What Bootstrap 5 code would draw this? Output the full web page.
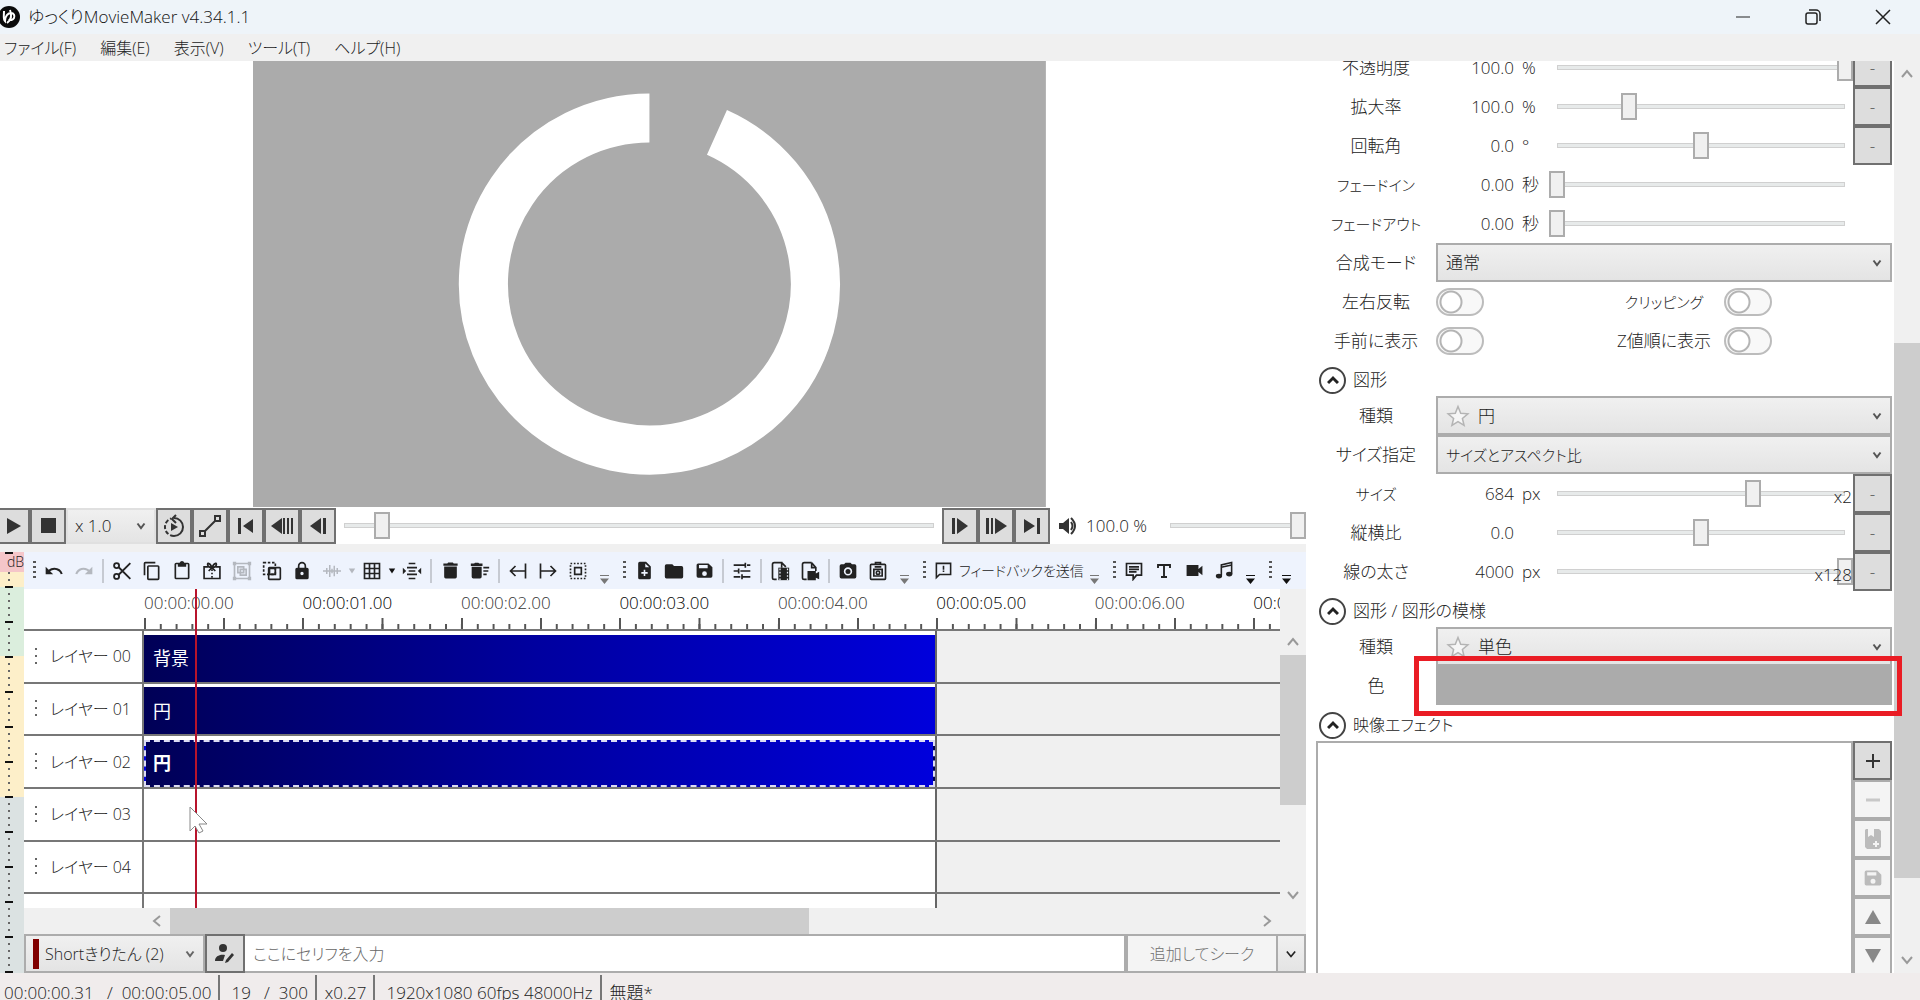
<!DOCTYPE html>
<html lang="ja">
<head>
<meta charset="utf-8">
<meta name="viewport" content="width=device-width, initial-scale=1">
<title>ゆっくりMovieMaker v4.34.1.1</title>
<link href="https://cdn.jsdelivr.net/npm/bootstrap@5.3.0/dist/css/bootstrap.min.css" rel="stylesheet">
<style>
:root{--edge:#707070;--soft:#acacac;--face:#dddddd;--chrome:#f0f0f0;--ink:#222}
body{font-family:"Open Sans","Noto Sans CJK JP",sans-serif;font-size:17px;font-weight:300;line-height:24px;color:var(--ink);background:#fff;font-feature-settings:"palt"}
button,input,select{font-family:inherit;font-size:inherit;font-weight:inherit;line-height:inherit;color:inherit;font-feature-settings:inherit;margin:0}
button{padding:0;display:inline-flex;align-items:center;justify-content:center}
svg{display:block;flex:none}
.kana{font-size:15px!important}
.app-window{height:100vh;min-width:1200px}
.title-strip{height:34px;background:#eef4f9;color:#111;padding-right:2px}
.title-strip button{width:70px;height:34px;border:0;background:none}
.menu-strip{height:27px;background:var(--chrome);z-index:2;font-size:16px;gap:24px;padding-top:1px}
.menu-strip a{color:#222;text-decoration:none}
.work-area{flex:1 1 0;min-height:0}
.left-pane{min-width:0;background:var(--chrome)}
.preview-box{padding-right:7px;flex:1 1 0;min-height:0;background:#fff}
.tool-btn{width:36px;height:36px;border:2px solid var(--edge);background:var(--face)}
.play-strip{height:37px;background:#fff;margin-bottom:8px}
.combo{appearance:none;border:2px solid var(--soft);border-radius:0;color:#222;padding:0 30px 0 8px;
 background:url("data:image/svg+xml,%3Csvg xmlns='http://www.w3.org/2000/svg' width='10' height='8' viewBox='0 0 10 8'%3E%3Cpath d='M1.500 1.500 5 6l3.500-4.500' fill='none' stroke='%23555' stroke-width='2'/%3E%3C/svg%3E") no-repeat right 8px center,linear-gradient(#f0f0f0,#e4e4e4)}
.combo-rate{width:90px;height:36px;padding:0 24px 0 7px;border-color:#e0e0e0}
.range-bar{appearance:none;background:none;height:27px;min-width:0;padding:0}
.range-bar::-webkit-slider-runnable-track{height:27px;background:linear-gradient(#e7eaea,#e7eaea) center/calc(100% - 18px) 3px no-repeat,linear-gradient(#d0d0d0,#d0d0d0) center/calc(100% - 16px) 5px no-repeat}
.range-bar::-webkit-slider-thumb{appearance:none;width:16px;height:27px;background:var(--chrome);border:2px solid var(--soft)}
.icon-strip{height:37px;background:#eef3fd;padding-left:5px;overflow:hidden}
.tray{height:37px;margin-right:3px}
.tray button{width:30px;height:37px;border:0;background:none}
.tray .drop-btn{width:10px}
.tray .more-btn{width:23px;align-items:flex-end;padding-bottom:5px}
.tray .feed-btn{width:154px;gap:6px;justify-content:flex-start;padding-left:5px}
.tray button:disabled{color:#b4b8bf}
.grip{width:10px;height:20px;background:repeating-linear-gradient(#555 0 2px,transparent 2px 5px) center/3px 20px no-repeat}
.vr-sep{width:2px;height:24px;margin:0 3px;background:#c6cad2}
.meter{width:24px;background:
 linear-gradient(#111,#111) 5px 0/8px 2px no-repeat,
 repeating-linear-gradient(#111 0 2px,transparent 2px 35px) 5px 34px/8px 100% no-repeat,
 repeating-linear-gradient(#666 0 2px,transparent 2px 7px) 8px 20px/2px 100% no-repeat,
 linear-gradient(#f5c6c9 0 20px,#fdefc9 20px 35px,#dbeedd 35px 104px,#fdefc9 104px 245px,#dbe2e2 245px)}
.meter span{display:block;font-size:14px;line-height:20px;padding-left:7px}
.ruler{height:42px;background:#fff;border-bottom:2px solid #777}
.ruler-sec{flex:0 0 13.95%;padding-top:2px;color:#333;background:linear-gradient(90deg,#555 2px,transparent 2px) left bottom/10% 5px repeat-x,linear-gradient(90deg,#555 2px,transparent 2px) left bottom/50% 11px repeat-x}
.ruler-sec:nth-child(even){color:#000}
.head-col{width:120px;flex:none}
.lanes{height:277px}
.lane{height:19%;border-bottom:2px solid #777}
.lane .head-col{background:#fff;border-right:2px solid #777;padding-left:11px;gap:13px;font-size:16px}
.lane-dots{width:2px;height:17px;background:repeating-linear-gradient(#666 0 2px,transparent 2px 7px)}
.lane-range{width:69.8%;background:#fff;border-right:2px solid #666}
.clip{height:47px;color:#fff;font-size:18px;font-weight:400;padding-left:9px;background:linear-gradient(90deg,#000056,#0000a0 50%,#0000dc)}
.clip-chosen{border:2px dashed #dcdcf4;padding-left:7px;font-weight:700}
.playhead{position:absolute;left:171px;top:0;bottom:0;width:2px;background:#b8142c;z-index:2}
.pointer{position:absolute;left:165px;top:216px;z-index:3}
.bar-v{width:26px;background:var(--chrome)}
.bar-v i,.bar-h i{display:block;background:#cdcdcd}
.bar-h{height:26px;margin-left:120px;margin-right:26px}
.bar-h i{width:639px;height:26px}
.arrow-cell{width:26px;height:26px;color:#999}
.entry-strip{height:39px}
.voice-box{width:181px;border:2px solid var(--soft);background:linear-gradient(#f0f0f0,#e4e4e4)}
.voice-box i{width:6px;height:30px;margin-left:7px;background:#800000}
.voice-box .combo{border:0;background:url("data:image/svg+xml,%3Csvg xmlns='http://www.w3.org/2000/svg' width='10' height='8' viewBox='0 0 10 8'%3E%3Cpath d='M1.500 1.500 5 6l3.500-4.500' fill='none' stroke='%23666' stroke-width='2'/%3E%3C/svg%3E") no-repeat right 8px center;padding:0 20px 0 6px;font-size:16px;min-width:0}
.line-input{border:2px solid var(--soft);border-width:2px 2px 2px 0;padding:0 8px;border-radius:0;outline:0;font-size:16px;min-width:0}
.line-input::placeholder{color:#666;opacity:1}
.seek-btn{width:152px;border:2px solid var(--soft);background:#f4f4f4;color:#707070;font-size:16px}
.seek-drop{width:28px;border:2px solid var(--soft);border-left:0;background:linear-gradient(#f0f0f0,#e4e4e4)}
.status-strip{height:27px;background:#f0ecec;padding-top:2px;overflow:hidden;white-space:nowrap}
.status-strip>span{border-right:2px solid #777;height:25px;padding:6px 7px 0 8px;line-height:24px}
.status-strip>.wide-cell{padding-left:11px}
.right-pane{width:606px;margin-left:8px;flex:none}
.props{margin-top:-13px;padding:0 2px}
.prop-row{height:39px}
.prop-row label{width:120px;flex:none;text-align:center}
.prop-row .combo{height:39px;flex:1 1 0;min-width:0}
.combo-star{padding-left:40px!important;background:url("data:image/svg+xml,%3Csvg xmlns='http://www.w3.org/2000/svg' width='10' height='8' viewBox='0 0 10 8'%3E%3Cpath d='M1.500 1.500 5 6l3.500-4.500' fill='none' stroke='%23555' stroke-width='2'/%3E%3C/svg%3E") no-repeat right 8px center,url("data:image/svg+xml,%3Csvg xmlns='http://www.w3.org/2000/svg' width='24' height='24' viewBox='0 0 24 24'%3E%3Cpath d='M12 2.500l2.700 6.700 7.200.600-5.500 4.700 1.700 7L12 17.700l-6.100 3.800 1.700-7L2.100 9.800l7.200-.600z' fill='%23f6f6f6' stroke='%23b4b4b4' stroke-width='1.500'/%3E%3C/svg%3E") no-repeat 8px center,linear-gradient(#f0f0f0,#e4e4e4)}
.num-val{width:78px;text-align:right}
.num-unit{width:27px;margin-left:8px}
.range-slot{flex:1 1 0;min-width:0}
.times-tag{position:absolute;right:1px;top:5px}
.anim-btn{width:39px;height:39px;border:2px solid var(--edge);background:var(--face);color:#555}
.anim-gap{width:39px}
.flip-box{appearance:none;width:48px;height:28px;border:2px solid #bcbcbc;border-radius:14px;background:radial-gradient(circle at 13px 12px,#fff 9px,#b4b4b4 10px 11px,transparent 12px) #f8f8f8}
.section-head{height:36px;gap:7px;padding-left:3px;padding-top:4px}
.section-head button{width:27px;height:27px;border:2px solid #444;border-radius:50%;background:#fff}
.color-well{flex:1 1 0;height:39px;border:0;background:#ababab}
.fx-area{flex:1 1 0;min-height:0;overflow:hidden;padding:0 2px}
.fx-list{flex:1 1 0;border:2px solid var(--soft);border-bottom:0;background:#fff}
.fx-btn{width:39px;height:39px;border:2px solid var(--soft);background:#f4f4f4;color:#b8b8b8;flex:none}
.fx-add{border-color:var(--edge);background:var(--face);color:#333}
.red-mark{position:absolute;right:18px;top:656px;width:488px;height:60px;border:5px solid #ea1c24;z-index:5;pointer-events:none}
</style>
</head>
<body class="overflow-hidden">
<svg width="0" height="0" class="position-absolute" aria-hidden="true"><defs>
<symbol id="undo" viewBox="0 0 24 24"><path d="M12.500 8c-2.650 0-5.050 1-6.900 2.600L2 7v9h9l-3.620-3.620A8 8 0 0 1 20.100 16l2.370-.780A10.500 10.500 0 0 0 12.500 8z"/></symbol>
<symbol id="redo" viewBox="0 0 24 24"><path d="M18.400 10.600A10.500 10.500 0 0 0 1.540 15.220L3.900 16a8 8 0 0 1 12.700-3.620L13 16h9V7z"/></symbol>
<symbol id="cut" viewBox="0 0 24 24"><g fill="none" stroke="currentColor" stroke-width="2.200"><circle cx="5.500" cy="5.500" r="3"/><circle cx="5.500" cy="18.500" r="3"/><path d="M8 7.500 22 21.500M8 16.500 22 2.500"/></g></symbol>
<symbol id="copy" viewBox="0 0 24 24"><path d="M16 1H4a2 2 0 0 0-2 2v14h2V3h12zm3 4H8a2 2 0 0 0-2 2v14a2 2 0 0 0 2 2h11a2 2 0 0 0 2-2V7a2 2 0 0 0-2-2zm0 16H8V7h11z"/></symbol>
<symbol id="paste" viewBox="0 0 24 24"><path d="M19 2h-4.180a3 3 0 0 0-5.640 0H5a2 2 0 0 0-2 2v16a2 2 0 0 0 2 2h14a2 2 0 0 0 2-2V4a2 2 0 0 0-2-2zm0 18H5V4h2v3h10V4h2z"/></symbol>
<symbol id="gift" viewBox="0 0 24 24"><g fill="none" stroke="currentColor" stroke-width="2"><path d="M8 7H2.500v14h19V7H16M12 8C9 1 5 2 7.500 6c1 1.500 3 2 4.500 2s3.500-.5 4.500-2C19 2 15 1 12 8M8 12l4-4 4 4"/><path d="M12 10v12" stroke-dasharray="2 2"/></g></symbol>
<symbol id="group" viewBox="0 0 24 24"><g fill="none" stroke="currentColor" stroke-width="2"><path d="M3 3h18v18H3z"/><path d="M7 7h7v7H7zM10 10h7v7h-7z"/></g><path d="M1 1h4v4H1zM19 1h4v4h-4zM1 19h4v4H1zM19 19h4v4h-4z"/></symbol>
<symbol id="merge" viewBox="0 0 24 24"><g fill="none" stroke="currentColor" stroke-width="2"><path d="M2 2h14v14H2z" stroke-dasharray="3 2"/><rect x="8" y="8" width="14" height="14" rx="1"/><path d="M9 9h7v7H9z"/></g></symbol>
<symbol id="lock" viewBox="0 0 24 24"><path d="M18 8h-1V6A5 5 0 0 0 7 6v2H6a2 2 0 0 0-2 2v10a2 2 0 0 0 2 2h12a2 2 0 0 0 2-2V10a2 2 0 0 0-2-2zm-6 9a2 2 0 1 1 0-4 2 2 0 0 1 0 4zM9 8V6a3 3 0 0 1 6 0v2z"/></symbol>
<symbol id="wave" viewBox="0 0 24 24"><path d="M0 12h24M5 8v8M9 4v16M12 9v6M15 5v14M19 8v8" fill="none" stroke="currentColor" stroke-width="2"/></symbol>
<symbol id="grid" viewBox="0 0 24 24"><path d="M3 3h18v18H3zM9 3v18M15 3v18M3 9h18M3 15h18" fill="none" stroke="currentColor" stroke-width="2"/></symbol>
<symbol id="spread" viewBox="0 0 24 24"><path d="M8 3h8M6 8h12M8 12h8M6 16h12M8 21h8" fill="none" stroke="currentColor" stroke-width="2"/><path d="M1 8v8l4-4zM23 8v8l-4-4z"/></symbol>
<symbol id="trash" viewBox="0 0 24 24"><path d="M4 7h16v13a2 2 0 0 1-2 2H6a2 2 0 0 1-2-2zM3 3h5l1-1h6l1 1h5v3H3z"/></symbol>
<symbol id="trashlist" viewBox="0 0 24 24"><path d="M2 7h12v12a2 2 0 0 1-2 2H4a2 2 0 0 1-2-2zM1 3h4l1-1h4l1 1h4v3H1zM16 7h7v2h-7zM16 11h6v2h-6zM16 15h4v2h-4z"/></symbol>
<symbol id="toleft" viewBox="0 0 24 24"><path d="M21 3v18M20 12H3M9 6l-6 6 6 6" fill="none" stroke="currentColor" stroke-width="2"/></symbol>
<symbol id="toright" viewBox="0 0 24 24"><path d="M3 3v18M4 12h17M15 6l6 6-6 6" fill="none" stroke="currentColor" stroke-width="2"/></symbol>
<symbol id="pick" viewBox="0 0 24 24"><path d="M3 3h18v18H3z" fill="none" stroke="currentColor" stroke-width="2" stroke-dasharray="2 2"/><path d="M8 8h8v8H8z" fill="none" stroke="currentColor" stroke-width="2"/></symbol>
<symbol id="filenew" viewBox="0 0 24 24"><path d="M14 1H6a2 2 0 0 0-2 2v18a2 2 0 0 0 2 2h12a2 2 0 0 0 2-2V7zM16 16h-3v3h-2v-3H8v-2h3v-3h2v3h3zM13 8V3l5 5z"/></symbol>
<symbol id="folder" viewBox="0 0 24 24"><path d="M10 4H3a2 2 0 0 0-2 2v13a2 2 0 0 0 2 2h18a2 2 0 0 0 2-2V8a2 2 0 0 0-2-2h-9z"/></symbol>
<symbol id="save" viewBox="0 0 24 24"><path d="M17 3H4a2 2 0 0 0-2 2v14a2 2 0 0 0 2 2h16a2 2 0 0 0 2-2V8zm-5 16a3 3 0 1 1 0-6 3 3 0 0 1 0 6zm4-10H5V5h11z"/></symbol>
<symbol id="tune" viewBox="0 0 24 24"><path d="M2 5h13M18 5h4M2 12h5M10 12h12M2 19h8M13 19h9M16 2v6M8 9v6M12 16v6" fill="none" stroke="currentColor" stroke-width="2"/></symbol>
<symbol id="docfilm" viewBox="0 0 24 24"><path d="M15 2H5a2 2 0 0 0-2 2v16a2 2 0 0 0 2 2h3M14 2l5 5M14 2v6" fill="none" stroke="currentColor" stroke-width="2"/><path d="M10 8h13v15H10z"/><path d="M12 9v14M21 9v14" stroke="#eef3fd" stroke-width="1.500" stroke-dasharray="2 2"/></symbol>
<symbol id="doccam" viewBox="0 0 24 24"><path d="M14 2H5a2 2 0 0 0-2 2v16a2 2 0 0 0 2 2h3M14 2l5 6v4M14 2v6h5" fill="none" stroke="currentColor" stroke-width="2"/><path d="M9 12h10v3l4-2v9l-4-2v3H9z"/></symbol>
<symbol id="camera" viewBox="0 0 24 24"><path d="M9 2 7.200 4H4a2 2 0 0 0-2 2v13a2 2 0 0 0 2 2h16a2 2 0 0 0 2-2V6a2 2 0 0 0-2-2h-3.200L15 2zM12 17.500a5 5 0 1 1 0-10 5 5 0 0 1 0 10z" fill-rule="evenodd"/><circle cx="12" cy="12.500" r="3"/></symbol>
<symbol id="clipcam" viewBox="0 0 24 24"><g fill="none" stroke="currentColor" stroke-width="2"><rect x="3" y="4" width="18" height="18" rx="1"/><path d="M7 10h10v8H7z"/><circle cx="12" cy="14" r="2"/><path d="M8 7h8M9 4V2h6v2"/></g></symbol>
<symbol id="feed" viewBox="0 0 24 24"><path d="M3 21V3h18v14H7z" fill="none" stroke="currentColor" stroke-width="2"/><path d="M11 6h2v5h-2zM11 12h2v2h-2z"/></symbol>
<symbol id="talk" viewBox="0 0 24 24"><path d="M3 3h18v14h-6l-4 5v-5H3zM6 7h12M6 10h12M6 13h9" fill="none" stroke="currentColor" stroke-width="2"/></symbol>
<symbol id="type" viewBox="0 0 24 24"><path d="M4 8V4h16v4M12 4v16M8 20h8" fill="none" stroke="currentColor" stroke-width="2.500"/></symbol>
<symbol id="video" viewBox="0 0 24 24"><path d="M2 5h15v5l5-4v12l-5-4v5H2z"/></symbol>
<symbol id="music" viewBox="0 0 24 24"><path d="M8 18V5l13-3v14M8 8l13-3" fill="none" stroke="currentColor" stroke-width="2"/><ellipse cx="5" cy="19" rx="4" ry="3"/><ellipse cx="18" cy="16.500" rx="4" ry="3"/></symbol>
<symbol id="caret" viewBox="0 0 10 6"><path d="M1 0h8L5 6z"/></symbol>
<symbol id="more" viewBox="0 0 10 10"><path d="M0 0h10v1H0zM0 4h10L5 10z"/></symbol>
<symbol id="up" viewBox="0 0 12 12"><path d="M1 9 6 3l5 6" fill="none" stroke="currentColor" stroke-width="2"/></symbol>
<symbol id="bold-up" viewBox="0 0 12 12"><path d="M1 9l5-5 5 5" fill="none" stroke="currentColor" stroke-width="3"/></symbol>
<symbol id="down" viewBox="0 0 12 12"><path d="M1 3l5 6 5-6" fill="none" stroke="currentColor" stroke-width="2"/></symbol>
</defs></svg>

<div class="app-window d-flex flex-column position-relative">
 <header class="title-strip d-flex align-items-center">
  <svg width="20" height="24" viewBox="0 0 20 24"><circle cx="9" cy="12" r="11" fill="#0b0b0b"/><path d="M4 6c0 5-1 8 1 10 0-5 3-8 6-8s4 3 3 5-4 3-5 1M10 5c2 5 1 10-3 13" fill="none" stroke="#fff" stroke-width="2"/></svg>
  <span class="ms-1 ps-1 me-auto">ゆっくりMovieMaker v4.34.1.1</span>
  <button aria-label="最小化"><svg width="16" height="16"><path d="M1 8h14" stroke="#222"/></svg></button>
  <button aria-label="元に戻す"><svg width="16" height="16" fill="none" stroke="#222" stroke-width="1.500"><rect x="1" y="4" width="11" height="11" rx="2"/><path d="M4 1h7a4 4 0 0 1 4 4v7"/></svg></button>
  <button aria-label="閉じる"><svg width="16" height="16"><path d="M1 1l14 14M15 1 1 15" stroke="#222" stroke-width="1.500"/></svg></button>
 </header>
 <nav class="menu-strip d-flex align-items-center ps-1">
  <a href="#">ファイル(F)</a><a href="#">編集(E)</a><a href="#">表示(V)</a><a href="#">ツール(T)</a><a href="#">ヘルプ(H)</a>
 </nav>

 <main class="work-area d-flex">
  <section class="left-pane flex-fill d-flex flex-column">
   <div class="preview-box d-flex justify-content-center">
    <svg height="100%" viewBox="0 0 1920 1080"><path fill="#ababab" d="M0 0h1920v1080H0z"/><path d="M960 138A402 402 0 1 0 1123.500 172.800" fill="none" stroke="#fff" stroke-width="119"/></svg>
   </div>
   <div class="play-strip d-flex align-items-center">
    <button class="tool-btn" style="width:30px;border-left:0" aria-label="再生"><svg width="14" height="18"><path d="M0 1l14 8L0 17z" fill="#333"/></svg></button>
    <button class="tool-btn" aria-label="停止"><svg width="15" height="15"><path d="M0 0h15v15H0z" fill="#333"/></svg></button>
    <select class="combo combo-rate" aria-label="再生速度"><option>x 1.0</option></select>
    <button class="tool-btn" aria-label="ループ"><svg width="22" height="24" viewBox="0 0 22 24" fill="none" stroke="#333" stroke-width="2"><path d="M11 4a9 9 0 0 1 0 18"/><path d="M11 22A9 9 0 0 1 8 4.500" stroke-dasharray="4 2"/><path d="M13 1 9 5l4 4"/><path d="M8 9v8l7-4z" fill="#333" stroke="none"/></svg></button>
    <button class="tool-btn" aria-label="経路"><svg width="22" height="22" fill="none" stroke="#333" stroke-width="2"><path d="M1 16h5v5H1zM16 1h5v5h-5zM6 16 16 6"/></svg></button>
    <button class="tool-btn" aria-label="先頭"><svg width="16" height="16" fill="#333"><path d="M0 0h3v16H0zM15 1v14L5 8z"/></svg></button>
    <button class="tool-btn" aria-label="戻る"><svg width="22" height="16" fill="#333"><path d="M11 0v16L0 8zM12 0h2v16h-2zM16 0h2v16h-2zM20 0h2v16h-2z"/></svg></button>
    <button class="tool-btn" aria-label="前フレーム"><svg width="16" height="16" fill="#333"><path d="M11 0v16L0 8zM13 0h3v16h-3z"/></svg></button>
    <input type="range" class="range-bar flex-fill" min="0" max="1000" value="65" aria-label="再生位置">
    <button class="tool-btn" aria-label="次フレーム"><svg width="16" height="16" fill="#333"><path d="M5 0v16l11-8zM0 0h3v16H0z"/></svg></button>
    <button class="tool-btn" aria-label="進む"><svg width="22" height="16" fill="#333"><path d="M10 0v16l12-8zM8 0H6v16h2zM4 0H1v16h3V0z"/></svg></button>
    <button class="tool-btn" aria-label="末尾"><svg width="16" height="16" fill="#333"><path d="M16 0h-3v16h3zM0 1v14l11-7z"/></svg></button>
    <svg class="ms-2" width="20" height="20" viewBox="0 0 20 20"><path d="M1 7h4l6-5v16l-6-5H1z" fill="#333"/><path d="M13 6q3 4 0 8M13 2q8 8 0 16" fill="none" stroke="#333" stroke-width="2"/></svg>
    <span class="ms-2" style="width:76px">100.0 %</span>
    <input type="range" class="range-bar" style="width:144px" min="0" max="100" value="100" aria-label="音量">
   </div>

   <div class="d-flex">
    <div class="meter"><span>dB</span></div>
    <div class="flex-fill" style="min-width:0">
     <div class="icon-strip d-flex align-items-center">
      <div class="tray d-flex align-items-center">
       <span class="grip"></span>
       <button aria-label="元に戻す"><svg width="20" height="20" fill="currentColor"><use href="#undo"/></svg></button>
       <button disabled aria-label="やり直す"><svg width="20" height="20" fill="currentColor"><use href="#redo"/></svg></button>
       <span class="vr-sep"></span>
       <button aria-label="切り取り"><svg width="20" height="20" fill="currentColor"><use href="#cut"/></svg></button>
       <button aria-label="コピー"><svg width="20" height="20" fill="currentColor"><use href="#copy"/></svg></button>
       <button aria-label="貼り付け"><svg width="20" height="20" fill="currentColor"><use href="#paste"/></svg></button>
       <button aria-label="分割"><svg width="20" height="20" fill="currentColor"><use href="#gift"/></svg></button>
       <button disabled aria-label="グループ化"><svg width="20" height="20" fill="currentColor"><use href="#group"/></svg></button>
       <button aria-label="グループ解除"><svg width="20" height="20" fill="currentColor"><use href="#merge"/></svg></button>
       <button aria-label="ロック"><svg width="20" height="20" fill="currentColor"><use href="#lock"/></svg></button>
       <button disabled aria-label="波形"><svg width="18" height="18" fill="currentColor"><use href="#wave"/></svg></button>
       <button disabled class="drop-btn" aria-label="波形メニュー"><svg width="8" height="6" fill="currentColor"><use href="#caret"/></svg></button>
       <button aria-label="グリッド"><svg width="20" height="20" fill="currentColor"><use href="#grid"/></svg></button>
       <button class="drop-btn" aria-label="グリッドメニュー"><svg width="8" height="6" fill="#111"><use href="#caret"/></svg></button>
       <button aria-label="間隔"><svg width="20" height="20" fill="currentColor"><use href="#spread"/></svg></button>
       <span class="vr-sep"></span>
       <button aria-label="削除"><svg width="19" height="19" fill="currentColor"><use href="#trash"/></svg></button>
       <button aria-label="詰めて削除"><svg width="20" height="20" fill="currentColor"><use href="#trashlist"/></svg></button>
       <span class="vr-sep"></span>
       <button aria-label="左へ"><svg width="20" height="20" fill="currentColor"><use href="#toleft"/></svg></button>
       <button aria-label="右へ"><svg width="20" height="20" fill="currentColor"><use href="#toright"/></svg></button>
       <button aria-label="選択"><svg width="20" height="20" fill="currentColor"><use href="#pick"/></svg></button>
       <button class="more-btn" aria-label="その他"><svg width="9" height="9" fill="#777"><use href="#more"/></svg></button>
      </div>
      <div class="tray d-flex align-items-center">
       <span class="grip"></span>
       <button aria-label="新規"><svg width="19" height="19" fill="currentColor"><use href="#filenew"/></svg></button>
       <button aria-label="開く"><svg width="20" height="20" fill="currentColor"><use href="#folder"/></svg></button>
       <button aria-label="保存"><svg width="19" height="19" fill="currentColor"><use href="#save"/></svg></button>
       <span class="vr-sep"></span>
       <button aria-label="設定"><svg width="20" height="20" fill="currentColor"><use href="#tune"/></svg></button>
       <span class="vr-sep"></span>
       <button aria-label="動画出力"><svg width="20" height="20" fill="currentColor"><use href="#docfilm"/></svg></button>
       <button aria-label="書き出し"><svg width="20" height="20" fill="currentColor"><use href="#doccam"/></svg></button>
       <span class="vr-sep"></span>
       <button aria-label="画像保存"><svg width="20" height="20" fill="currentColor"><use href="#camera"/></svg></button>
       <button aria-label="画像コピー"><svg width="20" height="20" fill="currentColor"><use href="#clipcam"/></svg></button>
       <button class="more-btn" aria-label="その他"><svg width="9" height="9" fill="#777"><use href="#more"/></svg></button>
      </div>
      <div class="tray d-flex align-items-center">
       <span class="grip"></span>
       <button class="feed-btn"><svg width="19" height="19" fill="currentColor"><use href="#feed"/></svg><span class="text-nowrap" style="font-size:14px">フィードバックを送信</span></button>
       <button class="more-btn" aria-label="その他"><svg width="9" height="9" fill="#777"><use href="#more"/></svg></button>
      </div>
      <div class="tray d-flex align-items-center">
       <span class="grip"></span>
       <button aria-label="ボイス"><svg width="20" height="20" fill="currentColor"><use href="#talk"/></svg></button>
       <button aria-label="テキスト"><svg width="18" height="18" fill="currentColor"><use href="#type"/></svg></button>
       <button aria-label="動画"><svg width="19" height="19" fill="currentColor"><use href="#video"/></svg></button>
       <button aria-label="音声"><svg width="19" height="19" fill="currentColor"><use href="#music"/></svg></button>
       <button class="more-btn" aria-label="その他"><svg width="9" height="9" fill="#111"><use href="#more"/></svg></button>
      </div>
      <div class="tray d-flex align-items-center">
       <span class="grip"></span>
       <button class="more-btn" aria-label="その他"><svg width="9" height="9" fill="#111"><use href="#more"/></svg></button>
      </div>
     </div>

     <div class="d-flex">
      <div class="flex-fill position-relative" style="min-width:0">
       <div class="ruler d-flex">
        <div class="head-col"></div>
        <div class="d-flex flex-fill overflow-hidden">
         <div class="ruler-sec">00:00:00.00</div><div class="ruler-sec">00:00:01.00</div><div class="ruler-sec">00:00:02.00</div><div class="ruler-sec">00:00:03.00</div><div class="ruler-sec">00:00:04.00</div><div class="ruler-sec">00:00:05.00</div><div class="ruler-sec">00:00:06.00</div><div class="ruler-sec">00:00:07.00</div>
        </div>
       </div>
       <div class="lanes overflow-hidden">
        <div class="lane d-flex"><div class="head-col d-flex align-items-center"><span class="lane-dots"></span><span>レイヤー 00</span></div><div class="flex-fill d-flex"><div class="lane-range d-flex flex-column justify-content-end"><div class="clip d-flex align-items-center">背景</div></div></div></div>
        <div class="lane d-flex"><div class="head-col d-flex align-items-center"><span class="lane-dots"></span><span>レイヤー 01</span></div><div class="flex-fill d-flex"><div class="lane-range d-flex flex-column justify-content-end"><div class="clip d-flex align-items-center">円</div></div></div></div>
        <div class="lane d-flex"><div class="head-col d-flex align-items-center"><span class="lane-dots"></span><span>レイヤー 02</span></div><div class="flex-fill d-flex"><div class="lane-range d-flex flex-column justify-content-end"><div class="clip clip-chosen d-flex align-items-center">円</div></div></div></div>
        <div class="lane d-flex"><div class="head-col d-flex align-items-center"><span class="lane-dots"></span><span>レイヤー 03</span></div><div class="flex-fill d-flex"><div class="lane-range"></div></div></div>
        <div class="lane d-flex"><div class="head-col d-flex align-items-center"><span class="lane-dots"></span><span>レイヤー 04</span></div><div class="flex-fill d-flex"><div class="lane-range"></div></div></div>
        <div class="lane d-flex"><div class="head-col"></div><div class="flex-fill d-flex"><div class="lane-range"></div></div></div>
       </div>
       <div class="playhead"></div>
       <svg class="pointer" width="20" height="30" viewBox="0 0 20 30"><path d="M1 2v24l5-5 4 7 4-2-4-7h8z" fill="#fff" stroke="#888"/></svg>
      </div>
      <div class="bar-v d-flex flex-column pt-4">
       <span class="arrow-cell d-flex align-items-center justify-content-center mt-3"><svg width="12" height="12"><use href="#up"/></svg></span>
       <i style="height:150px"></i>
       <span class="arrow-cell d-flex align-items-center justify-content-center mt-auto"><svg width="12" height="12"><use href="#down"/></svg></span>
      </div>
     </div>
     <div class="bar-h d-flex">
      <span class="arrow-cell d-flex align-items-center justify-content-center"><svg width="12" height="12"><path d="M9 1 3 6l6 5" fill="none" stroke="#999" stroke-width="2"/></svg></span>
      <i></i>
      <span class="arrow-cell d-flex align-items-center justify-content-center ms-auto"><svg width="12" height="12"><path d="M3 1l6 5-6 5" fill="none" stroke="#999" stroke-width="2"/></svg></span>
     </div>
     <div class="entry-strip d-flex">
      <div class="voice-box d-flex align-items-center"><i></i><select class="combo flex-fill align-self-stretch" aria-label="キャラクター"><option>Shortきりたん (2)</option></select></div>
      <button class="tool-btn h-100" style="width:40px" aria-label="キャラクター編集"><svg width="20" height="22" viewBox="0 0 20 22" fill="#333"><circle cx="8" cy="5" r="4"/><path d="M0 18c0-5 5-7 10-6l-2 6zM10 20l1-3 6-7 2 2-6 7z"/></svg></button>
      <input class="line-input flex-fill" type="text" placeholder="ここにセリフを入力" aria-label="セリフ">
      <button class="seek-btn">追加してシーク</button>
      <button class="seek-drop" aria-label="追加方法"><svg width="10" height="10"><use href="#down"/></svg></button>
     </div>
    </div>
   </div>
  </section>

  <aside class="right-pane d-flex">
   <div class="flex-fill d-flex flex-column" style="min-width:0">
    <div class="props">
     <div class="prop-row d-flex align-items-center"><label for="r1">不透明度</label><span class="num-val">100.0</span><span class="num-unit">%</span><div class="range-slot"><input id="r1" type="range" class="range-bar w-100 d-block" value="100"></div><button class="anim-btn">-</button></div>
     <div class="prop-row d-flex align-items-center"><label for="r2">拡大率</label><span class="num-val">100.0</span><span class="num-unit">%</span><div class="range-slot"><input id="r2" type="range" class="range-bar w-100 d-block" value="25"></div><button class="anim-btn">-</button></div>
     <div class="prop-row d-flex align-items-center"><label for="r3">回転角</label><span class="num-val">0.0</span><span class="num-unit">°</span><div class="range-slot"><input id="r3" type="range" class="range-bar w-100 d-block" value="50"></div><button class="anim-btn">-</button></div>
     <div class="prop-row d-flex align-items-center"><label for="r4" class="kana">フェードイン</label><span class="num-val">0.00</span><span class="num-unit">秒</span><div class="range-slot"><input id="r4" type="range" class="range-bar w-100 d-block" value="0"></div><span class="anim-gap"></span></div>
     <div class="prop-row d-flex align-items-center"><label for="r5" class="kana">フェードアウト</label><span class="num-val">0.00</span><span class="num-unit">秒</span><div class="range-slot"><input id="r5" type="range" class="range-bar w-100 d-block" value="0"></div><span class="anim-gap"></span></div>
     <div class="prop-row d-flex align-items-center"><label for="s1">合成モード</label><select id="s1" class="combo"><option>通常</option></select></div>
     <div class="prop-row d-flex align-items-center"><div class="w-50 d-flex align-items-center"><label for="t1">左右反転</label><input id="t1" type="checkbox" class="flip-box"></div><div class="w-50 d-flex align-items-center"><label for="t2" class="kana">クリッピング</label><input id="t2" type="checkbox" class="flip-box"></div></div>
     <div class="prop-row d-flex align-items-center"><div class="w-50 d-flex align-items-center"><label for="t3">手前に表示</label><input id="t3" type="checkbox" class="flip-box"></div><div class="w-50 d-flex align-items-center"><label for="t4">Z値順に表示</label><input id="t4" type="checkbox" class="flip-box"></div></div>
     <div class="section-head d-flex align-items-center"><button aria-label="図形を折りたたむ"><svg width="12" height="12"><use href="#bold-up"/></svg></button>図形</div>
     <div class="prop-row d-flex align-items-center"><label for="s2">種類</label><select id="s2" class="combo combo-star"><option>円</option></select></div>
     <div class="prop-row d-flex align-items-center"><label for="s3">サイズ指定</label><select id="s3" class="combo kana"><option>サイズとアスペクト比</option></select></div>
     <div class="prop-row d-flex align-items-center"><label for="r6" class="kana">サイズ</label><span class="num-val">684</span><span class="num-unit">px</span><div class="range-slot position-relative"><input id="r6" type="range" class="range-bar w-100 d-block" value="68"><span class="times-tag">x2</span></div><button class="anim-btn">-</button></div>
     <div class="prop-row d-flex align-items-center"><label for="r7">縦横比</label><span class="num-val">0.0</span><span class="num-unit"></span><div class="range-slot"><input id="r7" type="range" class="range-bar w-100 d-block" value="50"></div><button class="anim-btn">-</button></div>
     <div class="prop-row d-flex align-items-center"><label for="r8">線の太さ</label><span class="num-val">4000</span><span class="num-unit">px</span><div class="range-slot position-relative"><input id="r8" type="range" class="range-bar w-100 d-block" value="100"><span class="times-tag">x128</span></div><button class="anim-btn">-</button></div>
     <div class="section-head d-flex align-items-center"><button aria-label="模様を折りたたむ"><svg width="12" height="12"><use href="#bold-up"/></svg></button>図形 / 図形の模様</div>
     <div class="prop-row d-flex align-items-center"><label for="s4">種類</label><select id="s4" class="combo combo-star"><option>単色</option></select></div>
     <div class="prop-row d-flex align-items-center"><label for="c1">色</label><button id="c1" class="color-well" aria-label="色"></button></div>
     <div class="section-head d-flex align-items-center"><button aria-label="映像エフェクトを折りたたむ"><svg width="12" height="12"><use href="#bold-up"/></svg></button><span style="font-size:16px">映像エフェクト</span></div>
    </div>
    <div class="fx-area d-flex">
     <div class="fx-list"></div>
     <div class="d-flex flex-column">
      <button class="fx-btn fx-add" aria-label="追加"><svg width="14" height="14"><path d="M7 0v14M0 7h14" stroke="#333" stroke-width="2"/></svg></button>
      <button class="fx-btn" disabled aria-label="削除"><svg width="14" height="14"><path d="M0 7h14" stroke="#c8c8c8" stroke-width="3"/></svg></button>
      <button class="fx-btn" disabled aria-label="テンプレート追加"><svg width="16" height="20" fill="#bbb"><path d="M1 0h2v8l3-2 3 2V0h5l2 2v16l-2 2H2l-2-2V1z"/><path d="M11 12v6M8 15h6" stroke="#f4f4f4" stroke-width="2"/></svg></button>
      <button class="fx-btn" disabled aria-label="保存"><svg width="20" height="20" fill="#bbb"><use href="#save"/></svg></button>
      <button class="fx-btn" aria-label="上へ"><svg width="16" height="14" fill="#888"><path d="M8 0l8 14H0z"/></svg></button>
      <button class="fx-btn" aria-label="下へ"><svg width="16" height="14" fill="#888"><path d="M0 0h16L8 14z"/></svg></button>
     </div>
    </div>
   </div>
   <div class="bar-v d-flex flex-column">
    <span class="arrow-cell d-flex align-items-center justify-content-center"><svg width="12" height="12"><use href="#up"/></svg></span>
    <i style="height:535px;margin-top:256px"></i>
    <span class="arrow-cell d-flex align-items-center justify-content-center mt-auto"><svg width="12" height="12"><use href="#down"/></svg></span>
   </div>
  </aside>
 </main>

 <footer class="status-strip d-flex">
  <span class="ps-1">00:00:00.31 &nbsp; / &nbsp;00:00:05.00</span><span class="wide-cell">19 &nbsp; / &nbsp;300</span><span>x0.27</span><span class="wide-cell">1920x1080 60fps 48000Hz</span><span class="border-0">無題*</span>
 </footer>
 <div class="red-mark"></div>
</div>
<script src="https://cdn.jsdelivr.net/npm/bootstrap@5.3.0/dist/js/bootstrap.bundle.min.js"></script>
</body>
</html>
